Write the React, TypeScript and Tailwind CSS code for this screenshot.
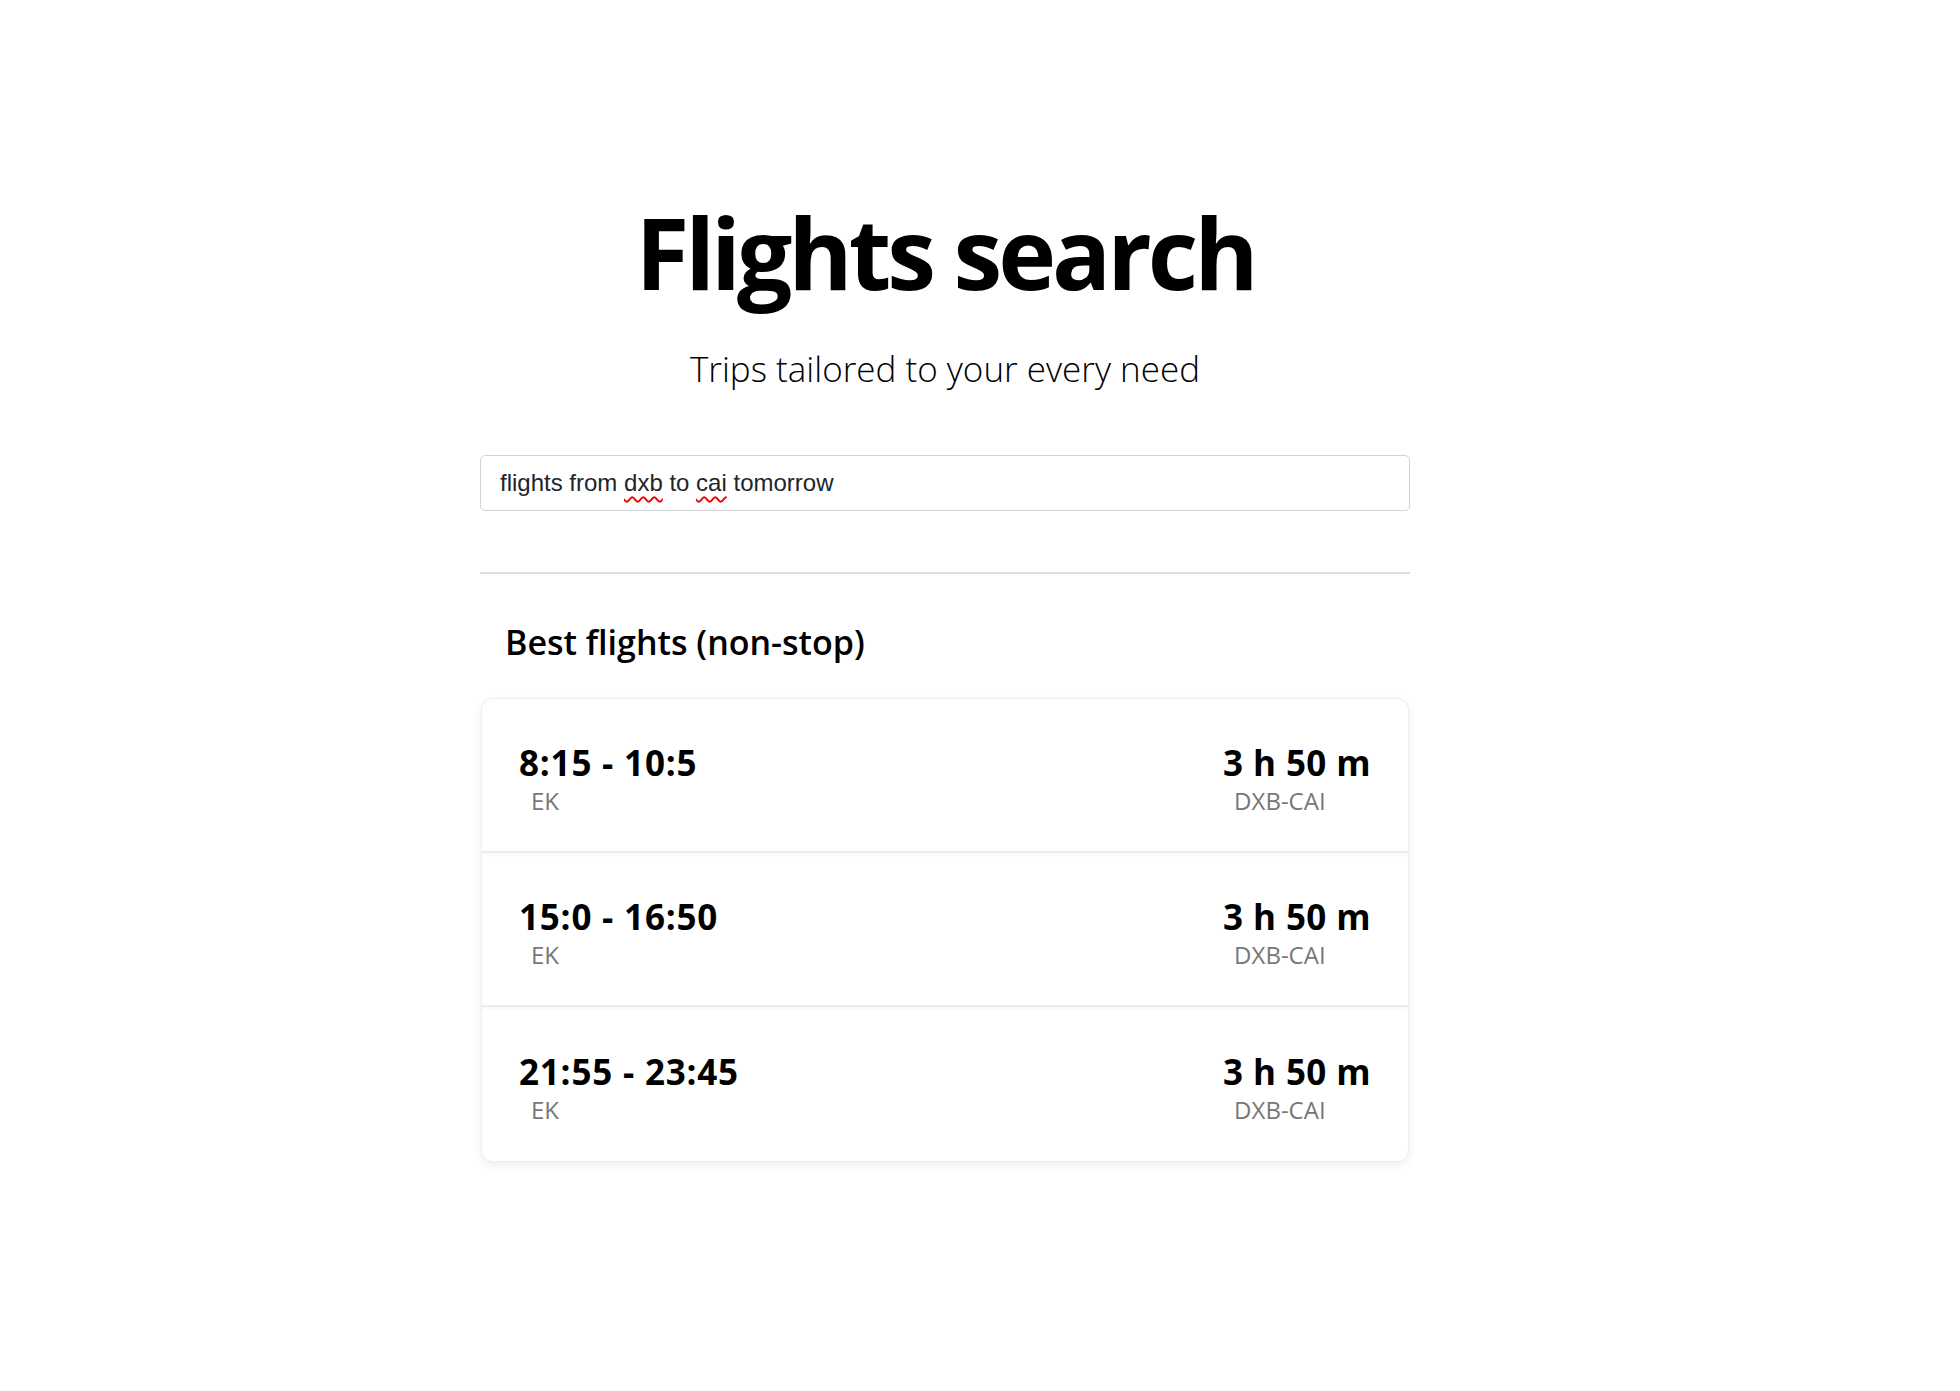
import React from "react";

type Flight = {
  times: string;
  airline: string;
  duration: string;
  route: string;
};

const flights: Flight[] = [
  { times: "8:15 - 10:5", airline: "EK", duration: "3 h 50 m", route: "DXB-CAI" },
  { times: "15:0 - 16:50", airline: "EK", duration: "3 h 50 m", route: "DXB-CAI" },
  { times: "21:55 - 23:45", airline: "EK", duration: "3 h 50 m", route: "DXB-CAI" },
];

const sans = "font-['Open_Sans','Noto_Sans',sans-serif]";

function FlightRow({ flight }: { flight: Flight }) {
  return (
    <div className="flex h-[154px] items-center justify-between px-[37px] pt-[8px] border-b-2 border-[#ececec] last:border-b-0 shadow-[0_2px_3px_rgba(0,0,0,0.03)]">
      <div>
        <h3 className="text-[35px] leading-[40px] font-bold text-black tracking-[0.8px]">{flight.times}</h3>
        <p className="mt-[4px] ml-[12px] text-[24px] leading-[28px] text-[#777]">{flight.airline}</p>
      </div>
      <div>
        <h3 className="text-[35px] leading-[40px] font-bold text-black tracking-[0.4px]">{flight.duration}</h3>
        <p className="mt-[4px] ml-[11px] text-[24px] leading-[28px] text-[#777]">{flight.route}</p>
      </div>
    </div>
  );
}

export default function App() {
  return (
    <div className={`min-h-[1391px] bg-white pr-[70px] ${sans}`}>
      <div className="mx-auto w-[930px] pt-[192px]">
        {/* Header */}
        <h1 className="text-center text-[98px] leading-[120px] font-bold text-black tracking-[-4px]">
          Flights search
        </h1>
        <p className="mt-[36px] text-center text-[35px] leading-[42px] font-light text-black">
          Trips tailored to your every need
        </p>

        {/* Search box */}
        <div className="mt-[65px] flex h-[56px] items-center rounded-[5px] border border-[#cfd2d6] px-[19px] font-['Liberation_Sans',Arial,sans-serif] text-[24px] text-[#212529]">
          <span>
            flights from{" "}
            <span className="underline decoration-wavy decoration-[#e00] decoration-[1.5px] underline-offset-[5px]">dxb</span>{" "}
            to{" "}
            <span className="underline decoration-wavy decoration-[#e00] decoration-[1.5px] underline-offset-[5px]">cai</span>{" "}
            tomorrow
          </span>
        </div>

        <div className="mt-[61px] h-[2px] bg-[#dedede]" />

        {/* Results */}
        <h2 className="mt-[48px] ml-[25px] text-[34px] leading-[40px] font-semibold text-black">
          Best flights (non-stop)
        </h2>

        <div className="mt-[36px] mx-[1px] overflow-hidden rounded-[12px] border border-[#eeeeee] bg-white shadow-[0_3px_8px_rgba(0,0,0,0.07)]">
          {flights.map((f) => (
            <FlightRow key={f.times} flight={f} />
          ))}
        </div>
      </div>
    </div>
  );
}
